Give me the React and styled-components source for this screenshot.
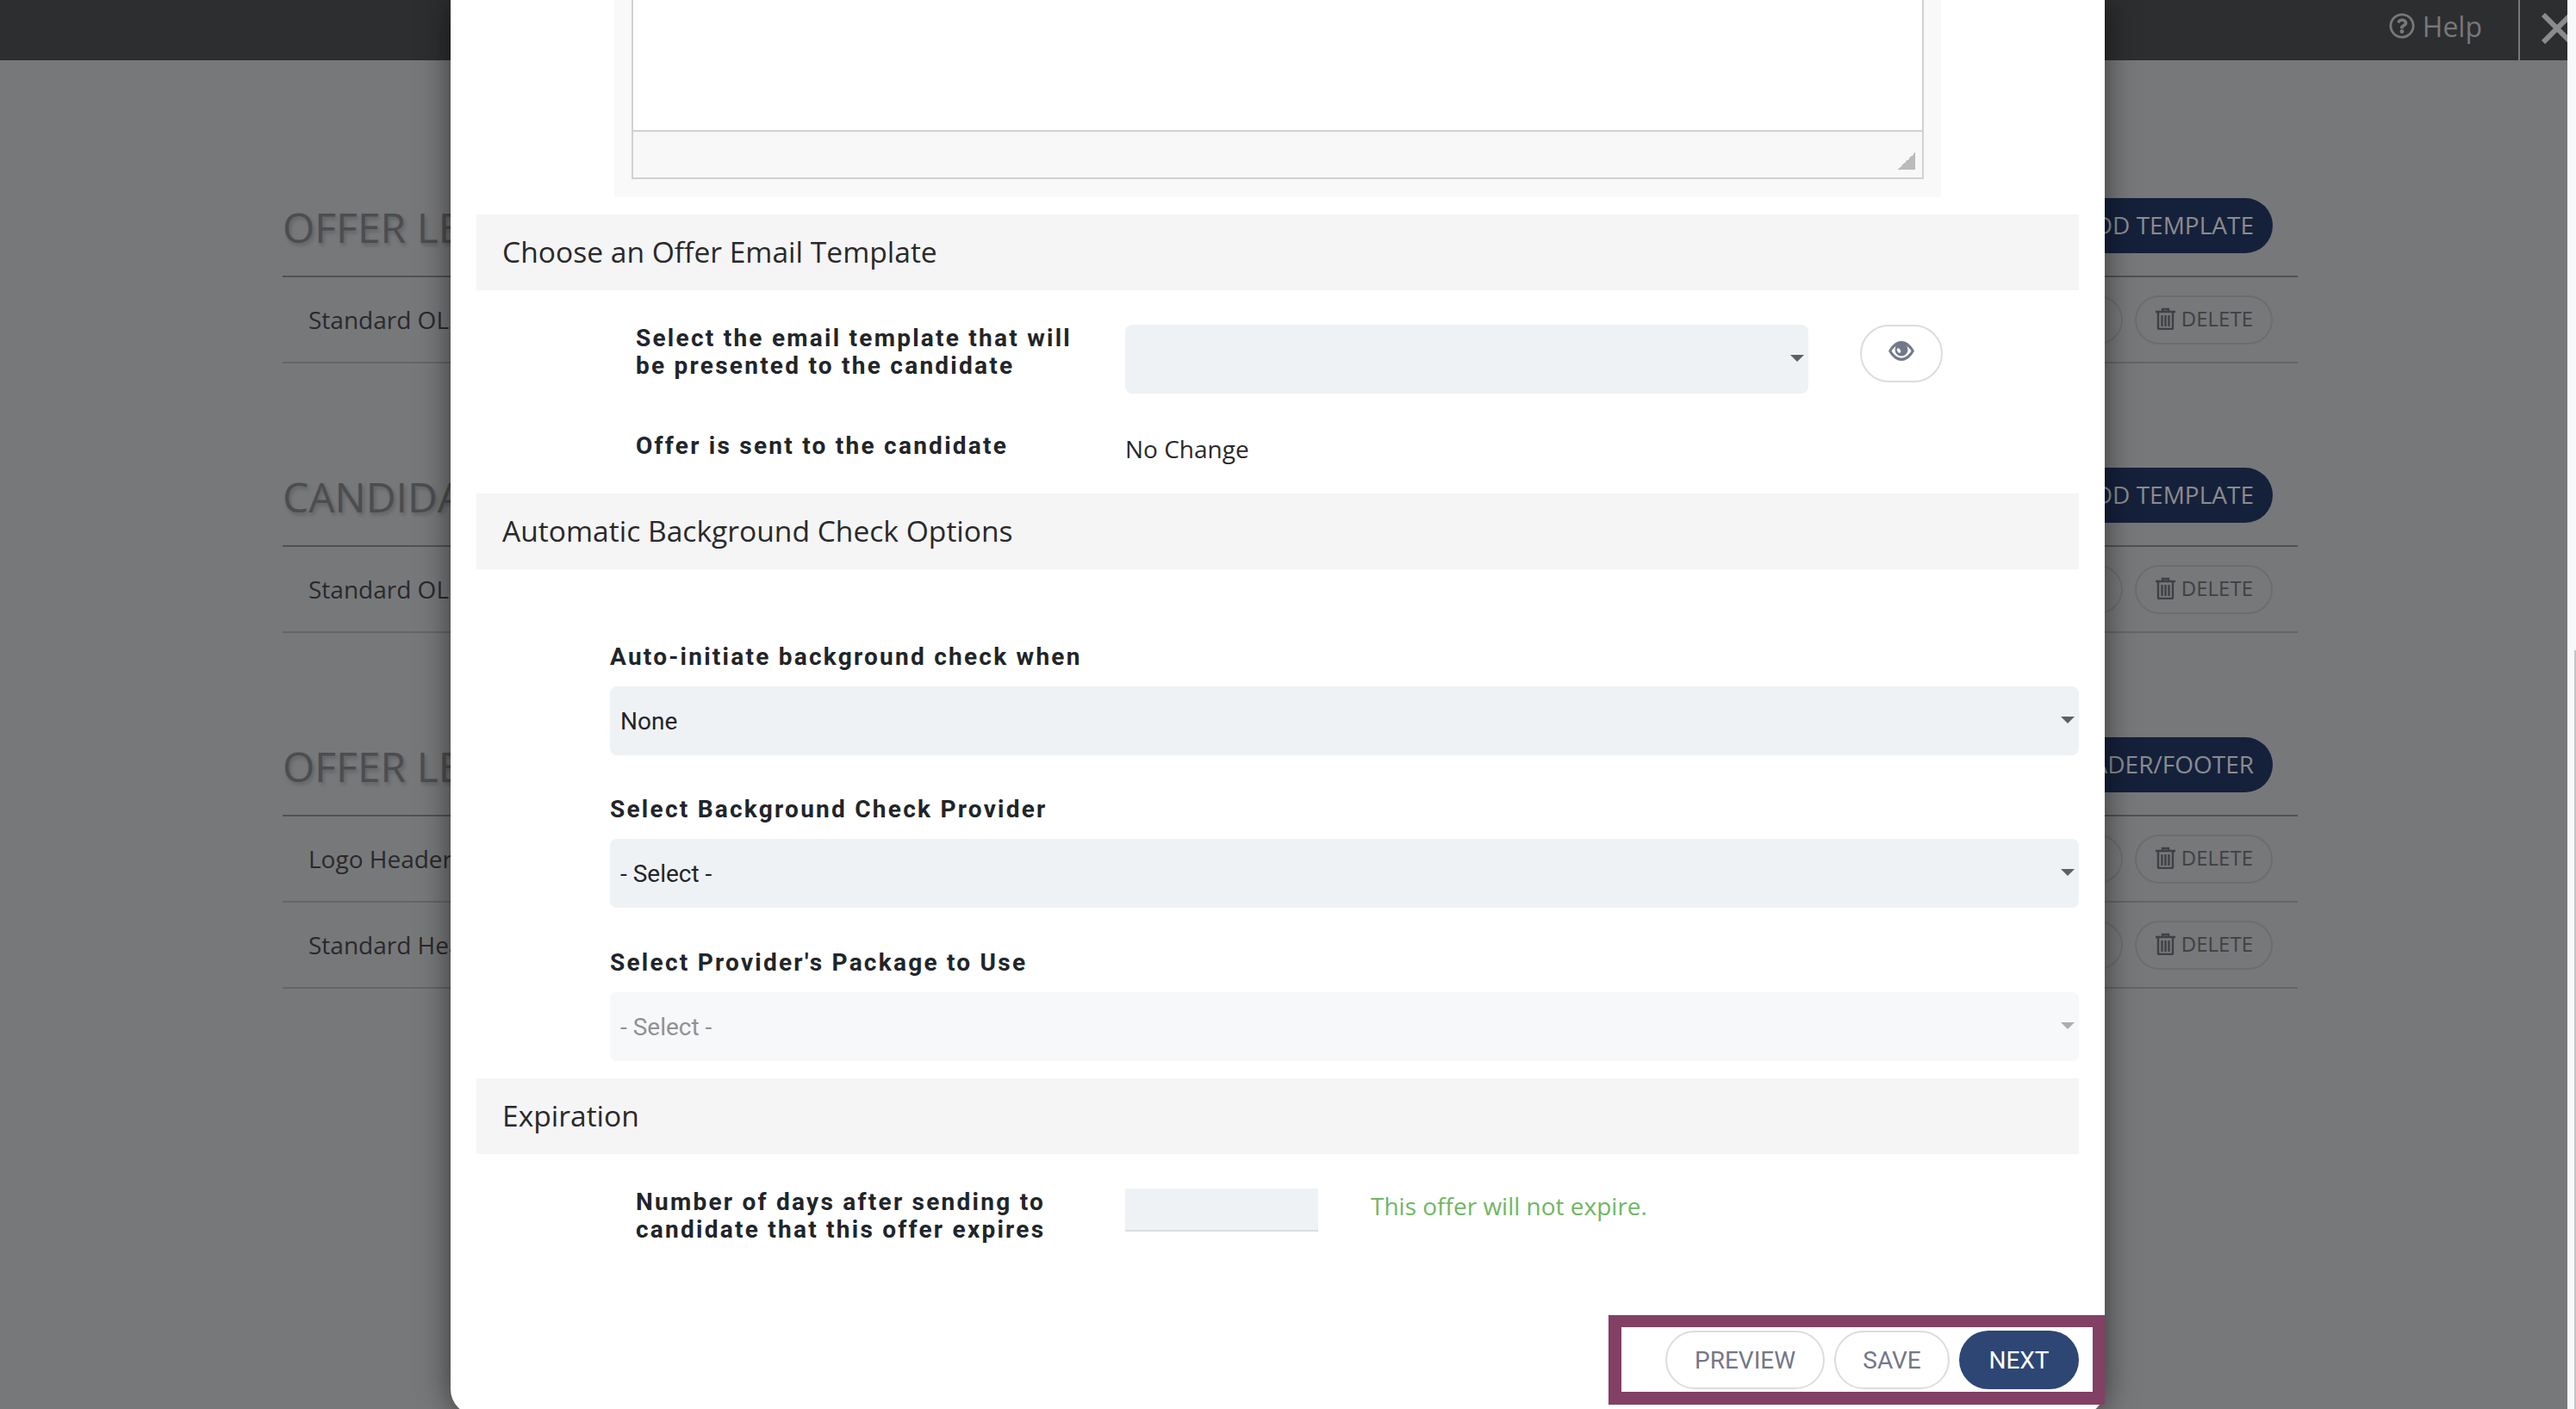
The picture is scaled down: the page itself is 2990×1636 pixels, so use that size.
import styled, { createGlobalStyle } from 'styled-components'
import { FaRegQuestionCircle } from 'react-icons/fa'

const GlobalStyle = createGlobalStyle`
html, body {
  margin: 0;
  padding: 0;
  background: #f8f8f8;
  overflow: hidden;
}
* { box-sizing: border-box; }
`

const Screen = styled.div`
position: relative;
width: 2990px;
height: 1636px;
overflow: hidden;
background: #f8f8f8;
`
const Scrollbar = styled.div`
position: absolute;
top: 755px;
right: 0;
bottom: 0;
width: 2px;
background: #c4c4c4;
`
const Page = styled.div`
width: 2980px;
height: 1636px;
background: #77787a;
font-family: "Open Sans", sans-serif;
`
const TopBar = styled.header`
height: 70px;
background: #2d2e30;
display: flex;
justify-content: flex-end;
align-items: stretch;
overflow: hidden;
`
const HelpLink = styled.div`
display: flex;
align-items: center;
gap: 9px;
color: #77787a;
font-size: 32px;
padding: 0 42px 10px 0;
svg { width: 30px; height: 30px; }
`
const CloseBox = styled.div`
width: 57px;
border-left: 2px solid #77787a;
padding: 15px 0 0 25px;
svg { display: block; width: 36px; height: 36px; }
`
const Content = styled.main`
padding: 130px 313px 0 328px;
`
const Group = styled.section`
margin-bottom: 91px;
`
const GroupHead = styled.div`
height: 122px;
padding: 0 29px 26px 0;
display: flex;
justify-content: space-between;
align-items: flex-end;
border-bottom: 2px solid #505153;
`
const GroupTitle = styled.h2`
margin: 0 0 -2px;
font-size: 48px;
line-height: 64px;
font-weight: 400;
color: #4c4d4f;
text-shadow: 2px 3px 4px rgba(0, 0, 0, 0.2);
`
const AddButton = styled.div`
height: 64px;
padding: 0 22px 3px 40px;
display: flex;
align-items: center;
border-radius: 32px;
background: #15213b;
color: #8b8c8e;
font-size: 28px;
`
const TemplateRow = styled.div`
height: 100px;
padding: 0 29px 0 30px;
display: flex;
justify-content: space-between;
align-items: center;
border-bottom: 2px solid #646567;
color: #29292b;
font-size: 28px;
`
const RowActions = styled.div`
display: flex;
gap: 14px;
`
const GhostButton = styled.div`
height: 57px;
padding: 0 21px 3px 22px;
display: flex;
align-items: center;
gap: 7px;
border: 2px solid #6c6d6f;
border-radius: 29px;
color: #3f4045;
font-size: 24px;
svg { width: 23px; height: 26px; }
`
const Modal = styled.div`
position: absolute;
top: 0;
left: 523px;
width: 1920px;
height: 1643px;
padding: 0 30px;
background: #fff;
border-radius: 0 0 30px 30px;
box-shadow: 0 0 36px rgba(0, 0, 0, 0.55);
color: #212529;
font-family: "Open Sans", sans-serif;
`
const EditorWrap = styled.div`
height: 229px;
margin: 0 160px 20px 160px;
padding: 0 20px 21px;
background: #f9f9f9;
`
const Editor = styled.div`
height: 100%;
display: flex;
flex-direction: column;
border: solid #d1d1d1;
border-width: 0 2px 2px;
background: #fff;
`
const EditorBody = styled.div`
flex: 1;
border-bottom: 2px solid #d1d1d1;
`
const EditorStatus = styled.div`
height: 53px;
padding: 24px 8px 0 0;
display: flex;
justify-content: flex-end;
background: #f8f8f8;
`
const ResizeHandle = styled.div`
width: 20px;
height: 20px;
background: linear-gradient(135deg, transparent 50%, #bbb 50%);
`
const SectionHead = styled.div`
height: 88px;
margin-top: ${(p) => p.$top || 0}px;
padding: 0 0 2px 30px;
display: flex;
align-items: center;
background: #f5f5f5;
font-size: 33.6px;
color: #29292b;
`
const FieldRow = styled.div`
display: grid;
grid-template-columns: 568px 793px auto;
align-items: start;
padding-left: 185px;
margin-top: ${(p) => p.$top}px;
`
const Label = styled.label`
display: block;
font-family: Roboto, sans-serif;
font-weight: 700;
font-size: 28px;
line-height: 32px;
letter-spacing: 2.25px;
color: #212529;
`
const SelectWrap = styled.div`
position: relative;
opacity: ${(p) => (p.$disabled ? 0.5 : 1)};
&::after {
  content: '';
  position: absolute;
  top: 35px;
  right: 5px;
  border-style: solid;
  border-width: 8px 8px 0;
  border-color: #606060 transparent transparent;
}
`
const Select = styled.select`
display: block;
width: 100%;
height: 80px;
padding: 0 12px;
border: 0;
border-radius: 8px;
background: #eff2f5;
appearance: none;
font-family: Roboto, sans-serif;
font-size: 28px;
color: #212529;
opacity: 1;
`
const EyeButton = styled.button`
width: 96px;
height: 67px;
margin-left: 60px;
padding: 0 0 6px;
display: flex;
align-items: center;
justify-content: center;
background: #fff;
border: 2px solid #ddd;
border-radius: 34px;
svg { width: 30px; height: 23px; }
`
const PlainValue = styled.div`
font-size: 28px;
line-height: 38px;
color: #29292b;
`
const FullField = styled.div`
margin-left: 155px;
margin-top: ${(p) => p.$top}px;
`
const FullLabel = styled(Label)`
line-height: 36px;
margin-bottom: 16px;
padding-top: 2px;
`
const DaysInput = styled.input`
display: block;
width: 224px;
height: 50px;
border: 0;
border-bottom: 2px solid #ddd;
background: #eff2f5;
`
const ExpireNote = styled.div`
margin-left: 61px;
font-size: 28px;
line-height: 40px;
color: #6fb765;
`
const ExpireValue = styled.div`
display: flex;
align-items: flex-start;
`
const Footer = styled.div`
margin-top: 101px;
display: flex;
justify-content: flex-end;
gap: 11px;
`
const FooterButton = styled.button`
height: 68px;
width: ${(p) => p.$w}px;
padding: 0;
border: ${(p) => (p.$primary ? '0' : '2px solid #ddd')};
border-radius: 34px;
background: ${(p) => (p.$primary ? '#2d4674' : '#fff')};
color: ${(p) => (p.$primary ? '#fff' : '#737889')};
font-family: Roboto, sans-serif;
font-size: 28px;
`
const Highlight = styled.div`
position: absolute;
right: 0;
bottom: 12px;
width: 576px;
height: 104px;
border: solid #824064;
border-width: 14px 14px 15px 15px;
pointer-events: none;
`

const TrashIcon = () => (
  <svg viewBox="0 0 23 26" fill="none" stroke="currentColor" strokeWidth="2.4">
    <path d="M0 5h23M8 5V2h7v3" />
    <path d="M3 6v18a1 1 0 0 0 1 1h15a1 1 0 0 0 1-1V6" />
    <path d="M7.5 9v13M11.5 9v13M15.5 9v13" />
  </svg>
)

const CloseIcon = () => (
  <svg viewBox="0 0 36 36" fill="none" stroke="#8a8b8c" strokeWidth="6">
    <path d="M2 2l32 32M34 2L2 34" />
  </svg>
)

const EyeIcon = () => (
  <svg viewBox="0 0 30 23">
    <path fill="#737889" d="M0 11.5C5 3 10 0 15 0s10 3 15 11.5C25 20 20 23 15 23S5 20 0 11.5z" />
    <path fill="#fff" d="M3.5 11.5C7 6 11 4 15 4s8 2 11.5 7.5C23 17 19 19.5 15 19.5S7 17 3.5 11.5z" />
    <circle fill="#737889" cx="15" cy="10" r="7.5" />
    <ellipse fill="#fff" cx="12" cy="11" rx="1.8" ry="3" transform="rotate(-30 12 11)" />
  </svg>
)

const groups = [
  { title: 'OFFER LETTER TEMPLATES', add: 'ADD TEMPLATE', rows: ['Standard OL Template'] },
  { title: 'CANDIDATE OFFER TEMPLATES', add: 'ADD TEMPLATE', rows: ['Standard OL Template'] },
  { title: 'OFFER LETTER HEADERS', add: 'ADD HEADER/FOOTER', rows: ['Logo Header', 'Standard Header'] },
]

const App = () => {
  return (
    <Screen>
      <GlobalStyle />
      <Page>
        <TopBar>
          <HelpLink>
            <FaRegQuestionCircle />
            <span>Help</span>
          </HelpLink>
          <CloseBox>
            <CloseIcon />
          </CloseBox>
        </TopBar>
        <Content>
          {groups.map((group, i) => (
            <Group key={i}>
              <GroupHead>
                <GroupTitle>{group.title}</GroupTitle>
                <AddButton>{group.add}</AddButton>
              </GroupHead>
              {group.rows.map((row) => (
                <TemplateRow key={row}>
                  <span>{row}</span>
                  <RowActions>
                    <GhostButton>EDIT</GhostButton>
                    <GhostButton>
                      <TrashIcon />
                      DELETE
                    </GhostButton>
                  </RowActions>
                </TemplateRow>
              ))}
            </Group>
          ))}
        </Content>
      </Page>
      <Scrollbar />

      <Modal>
        <EditorWrap>
          <Editor>
            <EditorBody />
            <EditorStatus>
              <ResizeHandle />
            </EditorStatus>
          </Editor>
        </EditorWrap>

        <SectionHead>Choose an Offer Email Template</SectionHead>
        <FieldRow $top={40}>
          <Label>Select the email template that will<br />be presented to the candidate</Label>
          <SelectWrap>
            <Select defaultValue="">
              <option value=""></option>
            </Select>
          </SelectWrap>
          <EyeButton><EyeIcon /></EyeButton>
        </FieldRow>
        <FieldRow $top={45}>
          <Label>Offer is sent to the candidate</Label>
          <PlainValue>No Change</PlainValue>
        </FieldRow>

        <SectionHead $top={33}>Automatic Background Check Options</SectionHead>
        <FullField $top={82}>
          <FullLabel>Auto-initiate background check when</FullLabel>
          <SelectWrap>
            <Select defaultValue="none"><option value="none">None</option></Select>
          </SelectWrap>
        </FullField>
        <FullField $top={43}>
          <FullLabel>Select Background Check Provider</FullLabel>
          <SelectWrap>
            <Select defaultValue=""><option value="">- Select -</option></Select>
          </SelectWrap>
        </FullField>
        <FullField $top={44}>
          <FullLabel>Select Provider's Package to Use</FullLabel>
          <SelectWrap $disabled>
            <Select defaultValue="" disabled><option value="">- Select -</option></Select>
          </SelectWrap>
        </FullField>

        <SectionHead $top={20}>Expiration</SectionHead>
        <FieldRow $top={40}>
          <Label>Number of days after sending to<br />candidate that this offer expires</Label>
          <ExpireValue>
            <DaysInput />
            <ExpireNote>This offer will not expire.</ExpireNote>
          </ExpireValue>
        </FieldRow>

        <Footer>
          <FooterButton $w={185}>PREVIEW</FooterButton>
          <FooterButton $w={134}>SAVE</FooterButton>
          <FooterButton $w={139} $primary>NEXT</FooterButton>
        </Footer>
        <Highlight />
      </Modal>
    </Screen>
  )
}

export default App
